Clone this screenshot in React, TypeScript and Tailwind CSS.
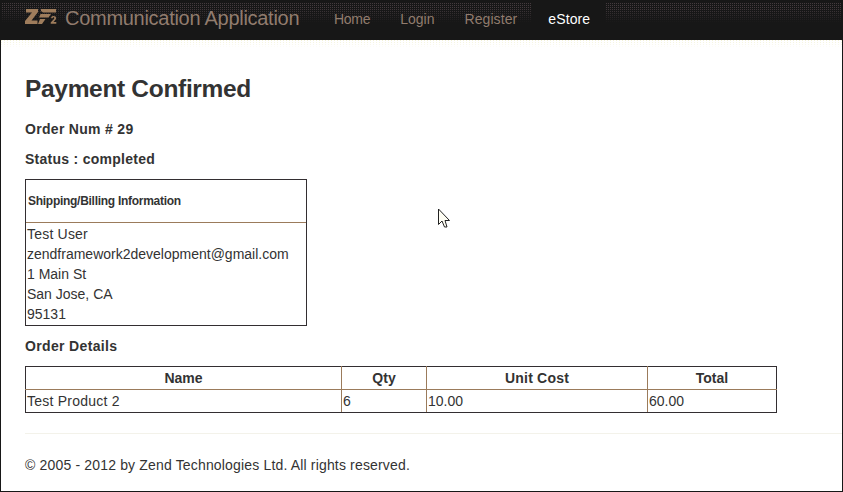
const cell = "border border-[#9b7b5b] px-px py-px";

function Logo() {
  return (
    <svg width="32" height="16" viewBox="0 0 32 16" fill="#9f7d5c" className="mr-[8px] mt-[8px] shrink-0">
      <path d="M1 1H13V4L6.5 12.5H12.5V16H0V13L7 4.5H1Z" />
      <path d="M16 1H31V4.5H18L16 3ZM15.5 6H26L23.5 9.5H14ZM15 11H20.5L17 15.9H13Z" />
      <path d="M26.2 10.2V9.3Q26.5 7.9 28.5 7.9Q31.2 7.9 31.2 10Q31.2 11.3 29.8 12.6L28.5 14H31.3V15.8H25.7V14.4L28.5 11.6Q29.4 10.6 29.3 10Q29.2 9.2 28.4 9.3Q27.7 9.4 27.7 10.2Z" />
    </svg>
  );
}

export default function App() {
  return (
    <div className="relative h-[492px] w-[843px] overflow-hidden border border-t-0 border-[#171717] bg-white font-['Liberation_Sans',Arial,sans-serif] text-[14px] leading-[20px] text-[#333]">
      <header className="relative flex h-[40px] bg-[#171717] pl-[24px] text-[#917c6e]">
        <div className="pointer-events-none absolute inset-x-[1px] top-[3px] h-[20px] bg-[radial-gradient(circle_at_0.5px_0.5px,#443a3e_0.7px,transparent_0.8px)] bg-[size:2px_2px] [mask-image:linear-gradient(#000,#000_25%,transparent)]" />
        <div className="relative flex w-[274px] items-start">
          <Logo />
          <span className="whitespace-nowrap pt-[8px] text-[20px] tracking-[-0.28px]">Communication Application</span>
        </div>
        <nav className="relative ml-[20px] flex">
          <a className="px-[15px] pt-[9px] tracking-[-0.3px]">Home</a>
          <a className="px-[15px] pt-[9px]">Login</a>
          <a className="pl-[15px] pr-[15px] pt-[9px] tracking-[0.1px]">Register</a>
          <a className="bg-[#171717] px-[16px] pt-[9px] tracking-[0.1px] text-white">eStore</a>
        </nav>
      </header>
      <div className="h-[8px] bg-[radial-gradient(circle_at_0.5px_0.5px,#f2f0d2_0.7px,transparent_0.8px)] bg-[size:3px_2px] [mask-image:linear-gradient(#000,transparent)]" />
      <main className="pl-[24px]">
        <h1 className="mt-[21px] text-[24.5px] font-bold leading-[40px] tracking-[-0.32px]">Payment Confirmed</h1>
        <h2 className="mt-[10px] font-bold tracking-[0.3px]">Order Num # 29</h2>
        <h2 className="mt-[10px] font-bold tracking-[0.27px]">Status : completed</h2>
        <section className="mt-[10px] h-[147px] w-[282px] border border-[#332e31]">
          <h3 className="h-[43px] border-b border-[#9b7b5b] pl-[2px] text-[12px] font-bold leading-[42px] tracking-[-0.28px]">Shipping/Billing Information</h3>
          <address className="pl-px pt-[1px] not-italic">
            <p className="tracking-[0.2px]">Test User</p>
            <p>zendframework2development@gmail.com</p>
            <p>1 Main St</p>
            <p>San Jose, CA</p>
            <p>95131</p>
          </address>
        </section>
        <h2 className="mt-[10px] font-bold tracking-[0.35px]">Order Details</h2>
        <table className="mt-[10px] h-[47px] w-[752px] table-fixed border-collapse border border-[#332e31]">
          <colgroup>
            <col className="w-[316px]" />
            <col className="w-[85px]" />
            <col className="w-[221px]" />
            <col />
          </colgroup>
          <thead>
            <tr>
              <th className={cell + " border-t-[#332e31] border-l-[#332e31]"}>Name</th>
              <th className={cell + " border-t-[#332e31]"}>Qty</th>
              <th className={cell + " border-t-[#332e31] tracking-[0.2px]"}>Unit Cost</th>
              <th className={cell + " border-t-[#332e31] border-r-[#332e31]"}>Total</th>
            </tr>
          </thead>
          <tbody>
            <tr>
              <td className={cell + " border-b-[#332e31] border-l-[#332e31] tracking-[0.23px]"}>Test Product 2</td>
              <td className={cell + " border-b-[#332e31]"}>6</td>
              <td className={cell + " border-b-[#332e31]"}>10.00</td>
              <td className={cell + " border-b-[#332e31] border-r-[#332e31]"}>60.00</td>
            </tr>
          </tbody>
        </table>
        <hr className="mt-[20px] border-[#f3f2ea]" />
        <footer className="mt-[21px] tracking-[0.165px]">© 2005 - 2012 by Zend Technologies Ltd. All rights reserved.</footer>
      </main>
      <svg className="absolute left-[437px] top-[208px]" width="13" height="21" viewBox="0 0 13 21" fill="#fffef4" stroke="#222" strokeWidth="1">
        <path d="M.5 1V16.5L4 13L6.5 19H9L7 12.5H11.5Z" />
      </svg>
    </div>
  );
}
